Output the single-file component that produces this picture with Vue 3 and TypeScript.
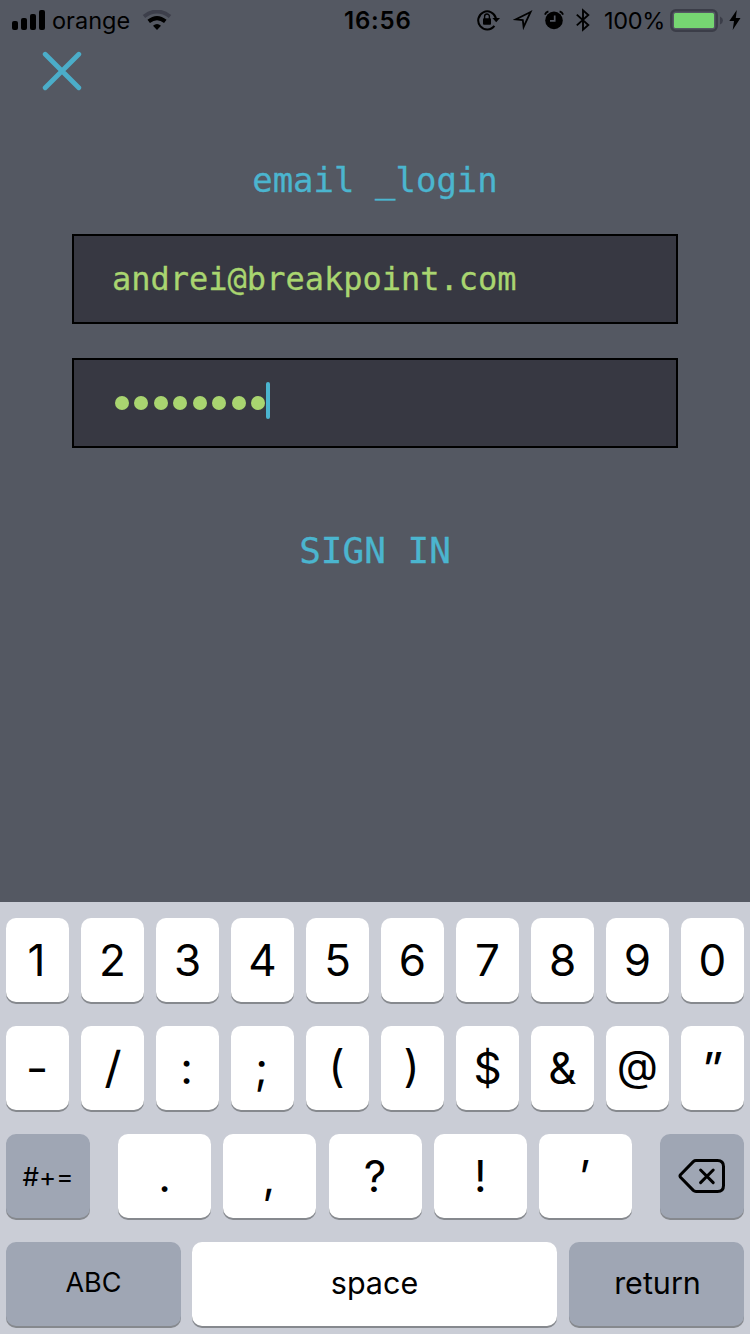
<script setup lang="ts">
import { ref } from 'vue'

interface Key {
  label: string
  name: string
}

const email = ref('andrei@breakpoint.com')
const passwordLength = ref(8)

const digits: Key[] = '1234567890'.split('').map((d) => ({ label: d, name: `digit-${d}` }))

const symbols: Key[] = [
  { label: '-', name: 'hyphen' },
  { label: '/', name: 'slash' },
  { label: ':', name: 'colon' },
  { label: ';', name: 'semicolon' },
  { label: '(', name: 'paren' },
  { label: ')', name: 'paren' },
  { label: '$', name: 'dollar' },
  { label: '&', name: 'ampersand' },
  { label: '@', name: 'at' },
  { label: '”', name: 'quote' },
]

const punctuation: Key[] = [
  { label: '.', name: 'period' },
  { label: ',', name: 'comma' },
  { label: '?', name: 'question' },
  { label: '!', name: 'exclamation' },
  { label: '’', name: 'apostrophe' },
]
</script>

<template>
  <main class="screen">
    <header class="status">
      <div class="status-left">
        <svg class="signal" width="34" height="20" viewBox="0 0 34 20">
          <rect x="0" y="11" width="6" height="9" rx="2" />
          <rect x="9" y="8" width="6" height="12" rx="2" />
          <rect x="18" y="4" width="6" height="16" rx="2" />
          <rect x="27" y="0" width="6" height="20" rx="2" />
        </svg>
        <span class="carrier">orange</span>
        <svg class="wifi" width="30" height="20" viewBox="0 0 30 20">
          <path d="M2 6.5Q15 -3.4 28 6.5" fill="none" stroke="#3d3f4b" stroke-width="4" />
          <path d="M6.7 11.4Q15 4.8 23.3 11.4" fill="none" stroke="#000" stroke-width="4" />
          <path d="M11 15.8Q15 12.2 19 15.8L15 20Z" />
        </svg>
      </div>
      <span class="clock">16:56</span>
      <div class="status-right">
        <svg class="lock" width="24" height="22" viewBox="0 0 24 22">
          <path d="M17.4 16.8A9 9 0 1 1 19 9.5" fill="none" stroke="#000" stroke-width="2" />
          <path d="M15.4 8.9H23L19.2 13.3Z" />
          <rect x="6" y="9.2" width="8" height="6.6" rx="1" />
          <path d="M7.6 10V7.4a2.4 2.4 0 0 1 4.8 0V10" fill="none" stroke="#000" stroke-width="1.4" />
        </svg>
        <svg class="arrow" width="20" height="20" viewBox="0 0 20 20">
          <path d="M17.6 2L2.6 9.4L9.8 10L10.6 17Z" fill="none" stroke="#000" stroke-width="1.8" />
        </svg>
        <svg class="alarm" width="20" height="20" viewBox="0 0 20 20">
          <circle cx="10" cy="10.4" r="8.8" />
          <path d="M10.7 5.6V10.9H6" fill="none" stroke="#545862" stroke-width="1.7" />
          <path d="M.9 4.6Q1.9 2 4.4 1.3M15.6 1.3Q18.1 2 19.1 4.6" fill="none" stroke="#000" stroke-width="1.8" />
        </svg>
        <svg class="bluetooth" width="14" height="24" viewBox="0 0 14 24">
          <path d="M.8 6.6L12.3 17L7 21.6V2.4L12.3 7L.8 17.4" fill="none" stroke="#000" stroke-width="1.9" />
        </svg>
        <span class="percent">100%</span>
        <svg class="battery" width="53" height="24" viewBox="0 0 53 24">
          <rect x="1.3" y="1.3" width="45.4" height="20.4" rx="4.5" fill="none" stroke="#3b3d48" stroke-width="2.4" />
          <rect x="4" y="4" width="40" height="15" rx="1.5" fill="#76d672" />
          <path d="M50 7.5Q53 9 53 11.5T50 15.5Z" fill="#3b3d48" />
        </svg>
        <svg class="bolt" width="12" height="20" viewBox="0 0 12 20">
          <path d="M7.8 0L.3 11H5L3.7 20L11.5 8H6.8Z" />
        </svg>
      </div>
    </header>

    <button class="close" aria-label="Close">
      <svg width="40" height="40" viewBox="0 0 40 40">
        <path d="M3.2 3.2L36.8 36.8M36.8 3.2L3.2 36.8" fill="none" stroke="#4badc9" stroke-width="4.8" stroke-linecap="round" />
      </svg>
    </button>

    <section class="form">
      <h1 class="title">email _login</h1>
      <div class="field">{{ email }}</div>
      <div class="field">
        <span class="dots">
          <i v-for="n in passwordLength" :key="n" class="dot"></i>
        </span>
        <span class="caret"></span>
      </div>
      <button class="sign-in">SIGN IN</button>
    </section>

    <section class="keyboard">
      <div class="row">
        <button v-for="k in digits" :key="k.label" class="key" :class="k.name">
          <span>{{ k.label }}</span>
        </button>
      </div>
      <div class="row">
        <button v-for="k in symbols" :key="k.label" class="key" :class="k.name">
          <span>{{ k.label }}</span>
        </button>
      </div>
      <div class="row punctuation-row">
        <button class="key dark more"><span>#+=</span></button>
        <div class="punctuation">
          <button v-for="k in punctuation" :key="k.label" class="key" :class="k.name">
            <span>{{ k.label }}</span>
          </button>
        </div>
        <button class="key dark" aria-label="Delete">
          <svg width="48" height="36" viewBox="0 0 48 36">
            <path
              d="M18 2.5H39.5Q45.5 2.5 45.5 8.5V27.5Q45.5 33.5 39.5 33.5H18Q16.5 33.5 15.3 32.4L2.5 19.2Q1.5 18 2.5 16.8L15.3 3.6Q16.5 2.5 18 2.5Z"
              fill="none" stroke="#000" stroke-width="3" stroke-linejoin="round"
            />
            <path d="M22.6 12L35.2 24.6M35.2 12L22.6 24.6" fill="none" stroke="#000" stroke-width="3" stroke-linecap="round" />
          </svg>
        </button>
      </div>
      <div class="row bottom-row">
        <button class="key dark abc"><span>ABC</span></button>
        <button class="key word"><span>space</span></button>
        <button class="key dark word return"><span>return</span></button>
      </div>
    </section>
  </main>
</template>

<style>
body {
  background: #545862;
}
</style>

<style scoped>
.screen {
  display: flex;
  flex-direction: column;
  width: 750px;
  height: 1334px;
  overflow: hidden;
  background: #545862;
  color: #000;
  font-family: Inter, 'Liberation Sans', sans-serif;
}

button {
  appearance: none;
  margin: 0;
  padding: 0;
  border: 0;
  background: none;
  color: inherit;
  font: inherit;
}

svg {
  display: block;
  flex: none;
}

.status {
  display: grid;
  grid-template-columns: 344px 133px 273px;
  align-items: center;
  height: 40px;
  font-size: 24px;
  line-height: 40px;
}

.status-left,
.status-right {
  display: flex;
  align-items: center;
}

.carrier,
.clock,
.percent {
  transform: translateY(1px);
}

.signal {
  margin-left: 12px;
}

.carrier {
  width: 78px;
  margin-left: 6px;
  font-size: 23.5px;
}

.wifi {
  margin-left: 12px;
}

.clock {
  font-weight: 600;
  letter-spacing: 0.8px;
}

.arrow {
  margin-left: 12px;
}

.alarm {
  margin-left: 11px;
}

.bluetooth {
  margin-left: 12px;
}

.percent {
  width: 61px;
  margin-left: 14px;
  font-size: 23.5px;
  letter-spacing: -0.3px;
  white-space: nowrap;
}

.battery {
  margin: 1px 0 0 5px;
}

.bolt {
  margin-left: 6px;
}

.close {
  width: 40px;
  height: 40px;
  margin: 11px 0 0 42px;
}

.form {
  display: flex;
  flex: 1;
  flex-direction: column;
  padding: 69px 72px 0;
  font-family: 'DejaVu Sans Mono', monospace;
  -webkit-text-stroke: 0.3px currentColor;
}

.title {
  height: 40px;
  margin: 0 0 34px;
  color: #4bb5cf;
  font-size: 34px;
  font-weight: 400;
  line-height: 40px;
  text-align: center;
}

.field {
  display: flex;
  align-items: center;
  box-sizing: border-box;
  height: 90px;
  margin-bottom: 34px;
  padding: 0 38px;
  border: 2px solid #000;
  background: #373842;
  color: #a9d570;
  font-size: 32px;
}

.dots {
  display: flex;
  gap: 5.45px;
  padding-left: 3px;
}

.dot {
  width: 14px;
  height: 14px;
  border-radius: 50%;
  background: #a9d570;
}

.caret {
  width: 4px;
  height: 37px;
  margin: 0 0 5px 1px;
  border-radius: 2px;
  background: #4bb5cf;
}

.sign-in {
  align-self: center;
  height: 44px;
  margin-top: 47px;
  color: #4bb5cf;
  font-size: 36px;
  line-height: 44px;
}

.keyboard {
  display: flex;
  flex-direction: column;
  gap: 24px;
  box-sizing: border-box;
  height: 432px;
  padding: 16px 6px 0;
  background: #cacdd6;
}

.row {
  display: grid;
  grid-template-columns: repeat(10, 63px);
  gap: 12px;
  height: 84px;
}

.punctuation-row {
  grid-template-columns: 84px 514px 84px;
  gap: 28px;
}

.punctuation {
  display: flex;
  justify-content: space-between;
}

.punctuation .key {
  width: 93px;
}

.bottom-row {
  grid-template-columns: 186px 377px 175px;
  gap: 0;
}

.bottom-row .abc {
  width: 175px;
}

.bottom-row .word {
  width: 365px;
}

.bottom-row .return {
  width: 175px;
}

.key {
  display: flex;
  align-items: center;
  justify-content: center;
  height: 84px;
  border-radius: 10px;
  background: #fff;
  box-shadow: 0 2px 0 #86898e;
  font-size: 44px;
  line-height: 84px;
}

.dark {
  background: #9fa6b4;
}

.digit-1 span {
  transform: translateX(-1px);
}

.hyphen span {
  transform: scaleX(1.12);
}

.slash span {
  transform: translateY(-1px) scaleX(1.1);
}

.colon span,
.semicolon span {
  transform: translate(-1px, 0);
}

.paren span {
  transform: translate(-1px, -2px);
}

.at span {
  transform: translateY(-3px) scale(0.97);
}

.quote span {
  transform: scaleX(1.1);
}

.comma span {
  transform: translate(-1px, 1px);
}

.apostrophe span {
  transform: translateX(-1px);
}

.more {
  font-size: 26px;
}

.more span {
  transform: translateY(1px);
}

.abc {
  font-size: 27px;
}

.abc span {
  transform: translateY(-1px);
}

.word {
  font-size: 30.5px;
}

.word span {
  transform: translateY(-1px);
}

.return span {
  transform: translate(1px, -1px);
}
</style>
